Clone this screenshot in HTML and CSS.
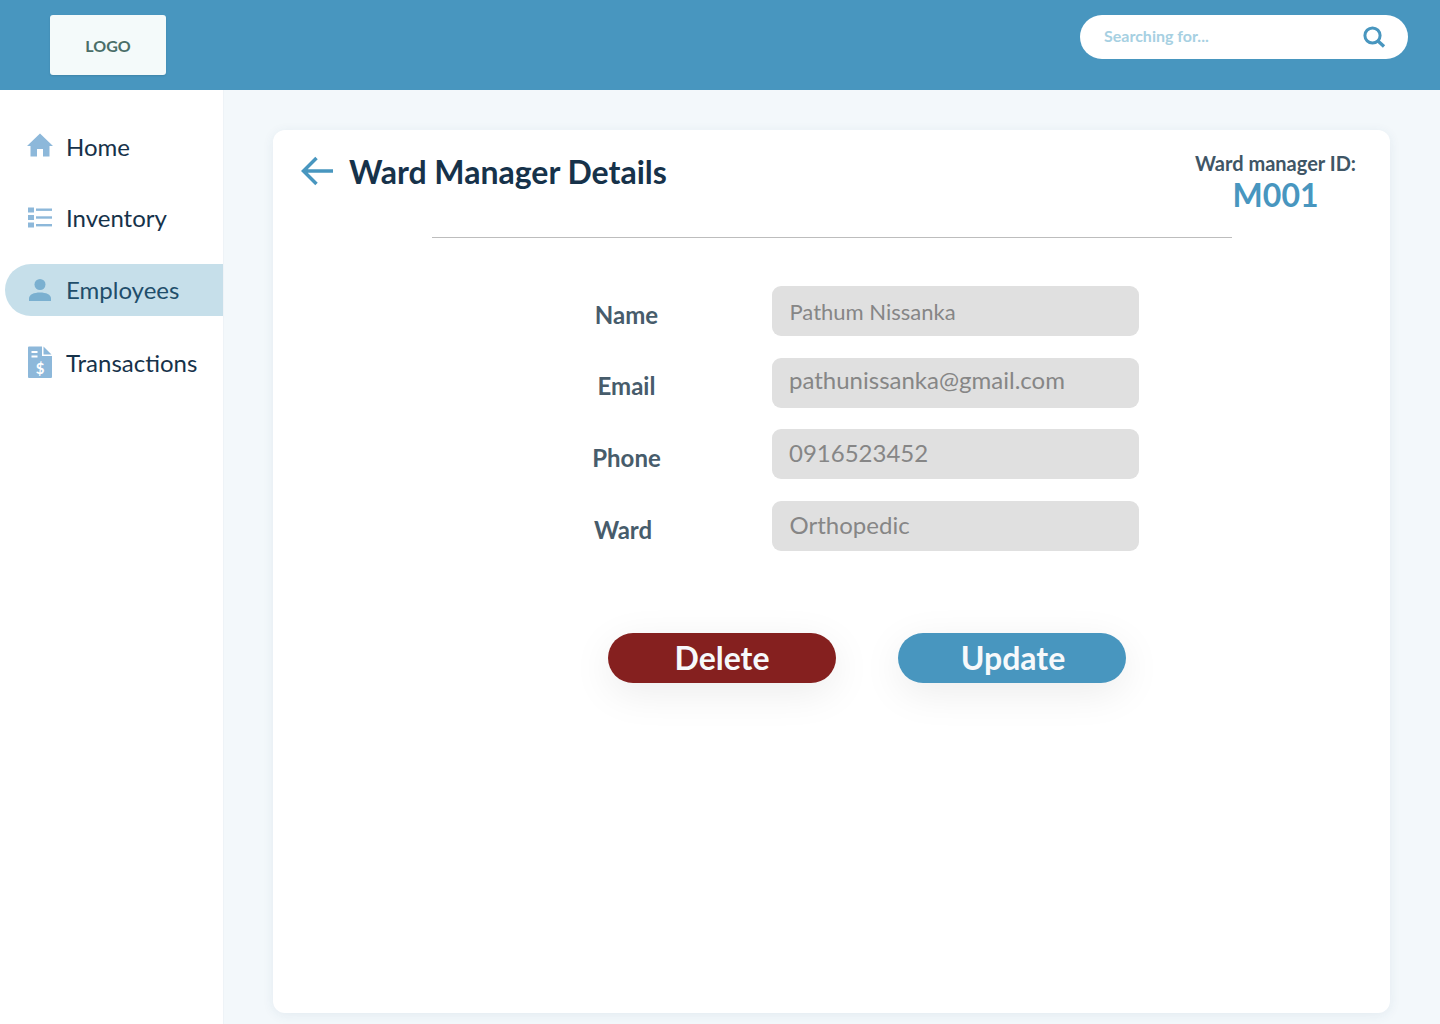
FILE: index.html
```html
<!DOCTYPE html>
<html lang="en">
<head>
    <meta charset="UTF-8">
    <meta name="viewport" content="width=device-width, initial-scale=1.0">
    <title>Ward Manager Details</title>
    <link rel="stylesheet" href="styles.css">
</head>
<body>
    <header class="topbar">
        <div class="logo">LOGO</div>
        <div class="search">
            <span class="search-text">Searching for...</span>
            <svg class="search-icon" width="24" height="24" viewBox="0 0 24 24" fill="none" stroke="#4896bf">
                <circle cx="10.5" cy="10.5" r="7.6" stroke-width="3"/>
                <path d="M16 16l6 5.4" stroke-width="3.4"/>
            </svg>
        </div>
    </header>

    <div class="layout">
        <nav class="sidebar">
            <a class="nav-item nav-home">
                <svg class="nav-icon" width="26" height="24" viewBox="0 0 26 24" fill="#8db8da">
                    <path d="M13 0.5L26 13h-3.500v10.500h-6.500v-7.500h-6v7.500H3.500V13H0z"/>
                </svg>
                <span>Home</span>
            </a>
            <a class="nav-item nav-inventory">
                <svg class="nav-icon" width="26" height="24" viewBox="0 0 26 24" fill="#8db8da">
                    <rect x="1" y="1.500" width="6" height="5"/>
                    <rect x="1" y="9" width="6" height="5"/>
                    <rect x="1" y="16.500" width="6" height="5"/>
                    <rect x="9" y="2.500" width="16" height="2.400"/>
                    <rect x="9" y="10.300" width="16" height="2.400"/>
                    <rect x="9" y="18" width="16" height="2.400"/>
                </svg>
                <span>Inventory</span>
            </a>
            <a class="nav-item nav-employees active">
                <svg class="nav-icon" width="26" height="24" viewBox="0 0 26 24" fill="#7bb0d0">
                    <circle cx="13" cy="6.500" r="5.500"/>
                    <path d="M2 23v-2.500C2 16.500 7 14.500 13 14.500s11 2 11 6V23z"/>
                </svg>
                <span>Employees</span>
            </a>
            <a class="nav-item nav-transactions">
                <svg class="nav-icon" width="26" height="34" viewBox="0 0 26 34" fill="#8db8da">
                    <path d="M1 1.500a1 1 0 0 1 1-1h13v9.500h10v21a1 1 0 0 1-1 1H2a1 1 0 0 1-1-1z"/>
                    <path d="M16.500 0.500l8 8h-8z"/>
                    <rect x="4.500" y="5" width="6" height="2" fill="#fff"/>
                    <rect x="4.500" y="9.500" width="6" height="2" fill="#fff"/>
                    <text x="13" y="28" text-anchor="middle" class="dollar">$</text>
                </svg>
                <span>Transactions</span>
            </a>
        </nav>

        <main class="content">
            <section class="card">
                <div class="card-head">
                    <svg class="back-icon" width="34" height="30" viewBox="0 0 34 30" fill="none" stroke="#4896bf" stroke-width="3.500">
                        <path d="M33 15H4M16.500 2L3.500 15l13 13"/>
                    </svg>
                    <h1>Ward Manager Details</h1>
                    <div class="manager-id">
                        <div class="id-label">Ward manager ID:</div>
                        <div class="id-value">M001</div>
                    </div>
                </div>
                <hr class="divider">

                <form class="details">
                    <label class="row-name">Name</label>
                    <div class="field field-name">Pathum Nissanka</div>
                    <label class="row-email">Email</label>
                    <div class="field field-email">pathunissanka@gmail.com</div>
                    <label class="row-phone">Phone</label>
                    <div class="field field-phone">0916523452</div>
                    <label class="row-ward">Ward</label>
                    <div class="field field-ward">Orthopedic</div>
                </form>

                <div class="actions">
                    <button type="button" class="btn btn-delete">Delete</button>
                    <button type="button" class="btn btn-update">Update</button>
                </div>
            </section>
        </main>
    </div>
</body>
</html>
```

FILE: styles.css
```css
/* Basic styling */
* {
    box-sizing: border-box;
}

html, body {
    height: 1024px;
    overflow: hidden;
}

body {
    margin: 0;
    font-family: Lato, "Open Sans", Arial, sans-serif;
    background-color: #f3f8fb;
    color: #16324a;
}

/* Top bar */
.topbar {
    height: 90px;
    background-color: #4896bf;
    display: flex;
    justify-content: space-between;
    padding: 15px 32px 0 50px;
}

.logo {
    width: 116px;
    height: 60px;
    background-color: #f4fafa;
    border-radius: 3px;
    box-shadow: 0 1px 2px rgba(0, 0, 0, 0.12);
    color: #4a6e68;
    font-size: 16px;
    font-weight: 700;
    display: flex;
    align-items: center;
    justify-content: center;
}

.search {
    width: 328px;
    height: 44px;
    background-color: #fff;
    border-radius: 22px;
    display: flex;
    align-items: center;
    justify-content: space-between;
    padding: 0 22px 0 24px;
}

.search-text {
    color: #a6d0e2;
    font-size: 16px;
    font-weight: 700;
    margin-top: -3px;
}

.search-icon {
    display: block;
}

/* Sidebar */
.layout {
    display: flex;
    height: 934px;
}

.sidebar {
    width: 224px;
    background-color: #fff;
    padding: 31px 0 0 5px;
    border-right: 1px solid #eef3f7;
}

.nav-item {
    height: 52px;
    display: flex;
    align-items: center;
    gap: 13px;
    padding-left: 22px;
    font-size: 24px;
    color: #16324a;
    border-radius: 26px 0 0 26px;
}

.nav-item span {
    margin-top: -2px;
}

.nav-icon {
    display: block;
    flex: none;
}

.nav-home {
    margin-bottom: 19px;
}

.nav-home .nav-icon {
    margin-top: -4px;
}

.nav-inventory {
    margin-bottom: 20px;
}

.nav-inventory .nav-icon {
    margin-top: -1px;
}

.nav-employees {
    margin-bottom: 21px;
}

.nav-item.active {
    background-color: #c6dfea;
    color: #1f4e6b;
}

.dollar {
    font-size: 15px;
    font-weight: 700;
    fill: #fff;
}

/* Card */
.content {
    flex: 1;
    padding: 40px 50px 11px 49px;
}

.card {
    height: 883px;
    background-color: #fff;
    border-radius: 12px;
    box-shadow: 0 2px 12px rgba(40, 80, 110, 0.08);
    padding-top: 20px;
}

.card-head {
    display: flex;
    align-items: flex-start;
    padding: 0 34px 0 27px;
    height: 87px;
}

.back-icon {
    display: block;
    margin-top: 6px;
    flex: none;
}

h1 {
    margin: 0 0 0 15px;
    font-size: 32px;
    line-height: 43px;
    font-weight: 700;
    color: #16324a;
    flex: 1;
}

.manager-id {
    text-align: center;
}

.id-label {
    font-size: 20px;
    line-height: 27px;
    font-weight: 700;
    color: #3f5666;
}

.id-value {
    font-size: 32px;
    line-height: 36px;
    font-weight: 700;
    color: #4896bf;
}

.divider {
    width: 800px;
    margin: 0 0 0 159px;
    border: 0;
    border-top: 1px solid #bdbdbd;
}

/* Form rows */
.details {
    display: grid;
    grid-template-columns: 499px 367px;
    grid-auto-rows: 50px;
    row-gap: 21.600px;
    margin-top: 48px;
}

.details label {
    display: block;
    text-align: center;
    padding-left: 208px;
    padding-top: 13px;
    font-size: 24px;
    line-height: 32px;
    font-weight: 700;
    color: #475c6b;
}

.details .row-email {
    padding-top: 12px;
}

.details .row-ward {
    padding-right: 7px;
}

.field {
    background-color: #e0e0e0;
    border-radius: 9px;
    padding-left: 17.500px;
    font-size: 24px;
    line-height: 48px;
    color: #868686;
}

.field-name {
    font-size: 22px;
    line-height: 52px;
}

.field-email {
    padding-left: 17px;
    line-height: 44px;
}

.field-phone {
    padding-left: 17px;
    line-height: 47px;
}

/* Buttons */
.actions {
    display: flex;
    gap: 62px;
    margin: 82px 0 0 335px;
}

.btn {
    width: 228px;
    height: 50px;
    border: none;
    border-radius: 25px;
    color: #f7f9fb;
    font-family: inherit;
    font-size: 32px;
    font-weight: 700;
    padding: 0;
    box-shadow: 0 10px 40px rgba(0, 0, 0, 0.08);
}

.btn-delete {
    background-color: #85201f;
}

.btn-update {
    background-color: #4896bf;
    padding-left: 2px;
}
```
